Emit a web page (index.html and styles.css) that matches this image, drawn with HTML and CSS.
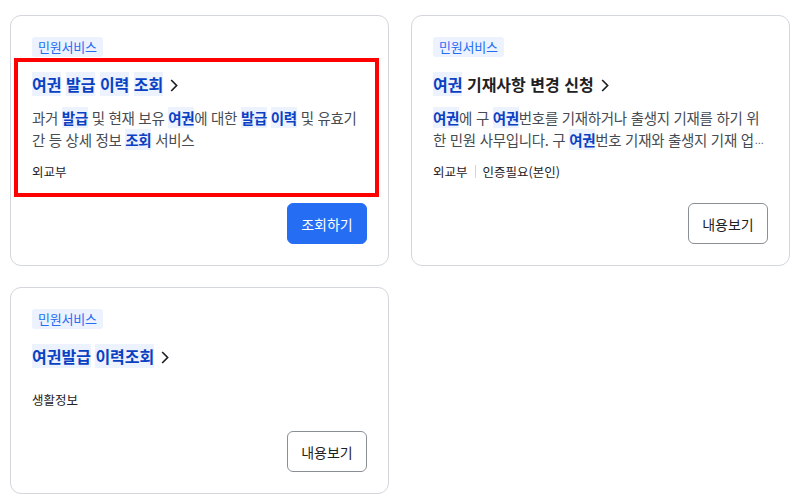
FILE: index.html
```html
<!DOCTYPE html>
<html lang="ko">
<head>
<meta charset="utf-8">
<link rel="stylesheet" href="styles.css">
</head>
<body>
<div class="grid">
  <div class="card">
    <span class="tag">민원서비스</span>
    <a class="title"><span class="hl">여권</span> <span class="hl">발급</span> <span class="hl">이력</span> <span class="hl">조회</span><svg class="chev" width="8" height="13" viewBox="0 0 8 13"><path d="M1.2 1 L6.6 6.5 L1.2 12" fill="none" stroke="#1e2124" stroke-width="1.7"/></svg></a>
    <p class="desc">과거 <b>발급</b> 및 현재 보유 <b>여권</b>에 대한 <b>발급</b> <b>이력</b> 및 유효기간 등 상세 정보 <b>조회</b> 서비스</p>
    <div class="meta"><span>외교부</span></div>
    <div class="actions"><button class="btn primary">조회하기</button></div>
    <div class="focus"></div>
  </div>
  <div class="card">
    <span class="tag">민원서비스</span>
    <a class="title"><span class="hl">여권</span> 기재사항 변경 신청<svg class="chev" width="8" height="13" viewBox="0 0 8 13"><path d="M1.2 1 L6.6 6.5 L1.2 12" fill="none" stroke="#1e2124" stroke-width="1.7"/></svg></a>
    <p class="desc"><b>여권</b>에 구 <b>여권</b>번호를 기재하거나 출생지 기재를 하기 위한 민원 사무입니다. 구 <b>여권</b>번호 기재와 출생지 기재 업<span class="ell">⋯</span></p>
    <div class="meta"><span>외교부</span><span class="sep"></span><span>인증필요(본인)</span></div>
    <div class="actions"><button class="btn">내용보기</button></div>
  </div>
  <div class="card">
    <span class="tag">민원서비스</span>
    <a class="title"><span class="hl">여권발급</span> <span class="hl">이력조회</span><svg class="chev" width="8" height="13" viewBox="0 0 8 13"><path d="M1.2 1 L6.6 6.5 L1.2 12" fill="none" stroke="#1e2124" stroke-width="1.7"/></svg></a>
    <div class="meta"><span>생활정보</span></div>
    <div class="actions"><button class="btn">내용보기</button></div>
  </div>
</div>
</body>
</html>
```

FILE: styles.css
```css
* { box-sizing: border-box; }
html, body { margin: 0; background: #ffffff; }
body {
  font-family: "Noto Sans CJK KR", "Noto Sans", sans-serif;
  color: #1e2124;
}
.grid {
  display: grid;
  grid-template-columns: 379px 379px;
  column-gap: 22px;
  row-gap: 21px;
  padding: 15px 10px;
  align-items: start;
}
.card {
  position: relative;
  display: flex;
  flex-direction: column;
  align-items: flex-start;
  border: 1px solid #d3d7dc;
  border-radius: 11px;
  padding: 21px;
  background: #fff;
}
.tag {
  display: inline-block;
  height: 20px;
  line-height: 20px;
  padding: 0 6px;
  font-size: 13px;
  color: #256ef4;
  background: #ecf2fe;
  border-radius: 3px;
  letter-spacing: -0.2px;
}
.title {
  display: block;
  margin-top: 15px;
  margin-bottom: 11px;
  height: 24px;
  line-height: 24px;
  font-size: 16px;
  font-weight: 700;
  color: #1e2124;
  white-space: nowrap;
}
.title .hl {
  color: #0a40c2;
  background: #ecf2fe;
}
.chev {
  margin-left: 7px;
  vertical-align: -1px;
}
.desc {
  margin: 0;
  width: 100%;
  max-height: 44px;
  font-size: 14.5px;
  line-height: 22px;
  color: #464c53;
  letter-spacing: -0.3px;
  word-break: break-all;
}
.desc b {
  color: #0a40c2;
  background: #ecf2fe;
  font-weight: 700;
}
.ell {
  font-family: "DejaVu Sans", sans-serif;
  font-size: 9px;
  letter-spacing: 0;
  margin-left: 1px;
  margin-right: -9px;
}
.meta {
  display: flex;
  align-items: center;
  margin-top: 11px;
  height: 18px;
  font-size: 12.5px;
  color: #1e2124;
}
.sep {
  width: 1px;
  height: 13px;
  background: #d3d7dc;
  margin: 0 7px;
}
.actions {
  align-self: stretch;
  display: flex;
  justify-content: flex-end;
  margin-top: 23px;
}
.btn {
  width: 80px;
  height: 41px;
  border-radius: 6px;
  border: 1px solid #8a8f96;
  background: #fff;
  color: #1e2124;
  font-family: inherit;
  font-size: 14px;
  padding: 0;
}
.btn.primary {
  background: #256ef4;
  border-color: #256ef4;
  color: #fff;
}
.focus {
  position: absolute;
  left: 3px;
  top: 42px;
  width: 365px;
  height: 139px;
  border: 4px solid #ff0000;
  pointer-events: none;
}
```
